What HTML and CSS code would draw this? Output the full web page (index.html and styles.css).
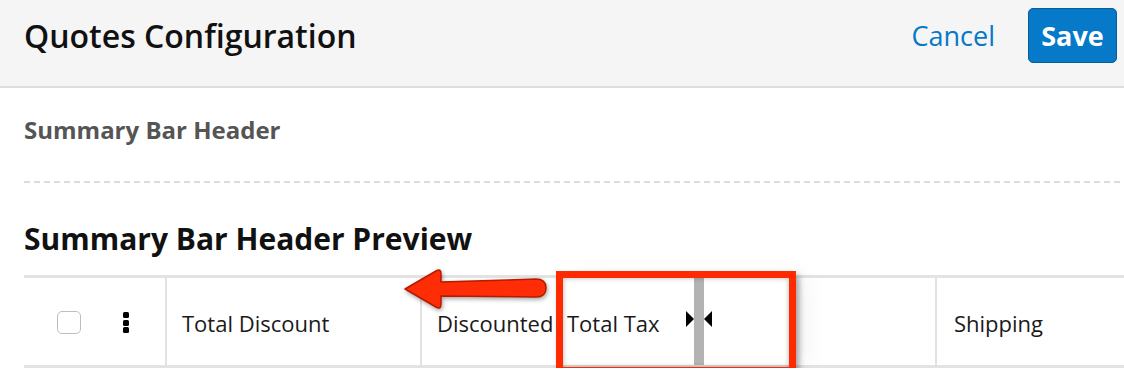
FILE: index.html
```html
<!DOCTYPE html>
<html>
<head>
<meta charset="utf-8">
<link rel="stylesheet" href="styles.css">
</head>
<body>
<header class="topbar">
  <h1 class="title">Quotes Configuration</h1>
  <div class="actions">
    <a class="cancel">Cancel</a>
    <button class="save">Save</button>
  </div>
</header>
<main class="content">
  <h2 class="section-title">Summary Bar Header</h2>
  <div class="dashed"></div>
  <h2 class="preview-title">Summary Bar Header Preview</h2>
  <div class="preview">
    <div class="row">
      <div class="cell select">
        <span class="checkbox"></span>
        <span class="dots"><i></i><i></i><i></i></span>
      </div>
      <div class="cell col-discount">Total Discount</div>
      <div class="cell col-subtotal"><span class="clip">Discounted Subtotal</span></div>
      <div class="cell col-empty"></div>
      <div class="cell col-shipping">Shipping</div>
    </div>
    <div class="dragged">
      <span class="dragged-label">Total Tax</span>
      <span class="resize">
        <svg width="26" height="16" viewBox="0 0 26 16"><path d="M0,0 L8,8 L0,16 Z M26,0 L18,8 L26,16 Z" fill="#000"/></svg>
      </span>
    </div>
    <div class="highlight"></div>
    <svg class="arrow" width="160" height="56" viewBox="0 0 160 56">
      <path d="M7,26 L38,8 Q43,5 43,11 L43,19 L138,16 Q148,16 148,25 Q148,34 138,34 L43,33 L43,41 Q43,47 38,44 Z" fill="#ff2d05" stroke="#b81a00" stroke-width="1.5" stroke-linejoin="round"/>
    </svg>
  </div>
</main>
</body>
</html>
```

FILE: styles.css
```css
* { box-sizing: border-box; }
body {
  margin: 0;
  font-family: "Open Sans", "Liberation Sans", sans-serif;
  color: #1a1a1a;
  background: #fff;
  overflow: hidden;
}
.topbar {
  height: 88px;
  background: #f5f5f5;
  border-bottom: 2px solid #dedede;
  display: flex;
  align-items: center;
  justify-content: space-between;
  padding: 0 7px 16px 24px;
}
.title {
  margin: 0;
  font-size: 32px;
  font-weight: 600;
  color: #111;
}
.actions {
  display: flex;
  align-items: center;
  gap: 33px;
}
.cancel {
  color: #0679c8;
  font-size: 27px;
  cursor: pointer;
}
.save {
  width: 89px;
  height: 55px;
  background: #0679c8;
  border: 1px solid #0a5c98;
  border-radius: 5px;
  color: #fff;
  font-family: "Open Sans", "Liberation Sans", sans-serif;
  font-size: 27px;
  font-weight: 700;
  padding: 0;
}
.content {
  padding: 0 0 0 24px;
}
.section-title {
  margin: 25px 0 0;
  font-size: 24px;
  line-height: 33px;
  font-weight: 700;
  color: #555;
}
.dashed {
  margin-top: 35px;
  height: 2px;
  background: repeating-linear-gradient(to right, #dcdcdc 0 6px, transparent 6px 10px);
}
.preview-title {
  margin: 35px 0 0;
  font-size: 30px;
  line-height: 41px;
  font-weight: 700;
  color: #111;
}
.preview {
  position: relative;
  margin-top: 16px;
}
.row {
  display: flex;
  height: 93px;
  border-top: 3px solid #e3e3e3;
  border-bottom: 3px solid #e3e3e3;
}
.cell {
  display: flex;
  align-items: center;
  font-size: 22px;
  white-space: nowrap;
  overflow: hidden;
  padding-top: 2px;
}
.select {
  width: 143px;
  border-right: 2px solid #e2e2e2;
  padding-left: 33px;
  gap: 42px;
}
.checkbox {
  width: 24px;
  height: 23px;
  border: 1px solid #bdbdbd;
  border-radius: 5px;
  background: #fff;
}
.dots {
  display: flex;
  flex-direction: column;
  gap: 1.5px;
}
.dots i {
  display: block;
  width: 6px;
  height: 6px;
  border-radius: 1.5px;
  background: #000;
}
.col-discount {
  width: 255px;
  padding-left: 15px;
  border-right: 2px solid #e2e2e2;
}
.col-subtotal {
  width: 258px;
  padding-left: 15px;
}
.clip {
  display: block;
  width: 125px;
  overflow: hidden;
}
.col-empty {
  width: 257px;
  border-right: 2px solid #e2e2e2;
}
.col-shipping {
  flex: 1;
  padding-left: 17px;
}
.dragged {
  position: absolute;
  left: 539px;
  top: 3px;
  width: 226px;
  height: 87px;
  background: #fff;
  display: flex;
  align-items: center;
  font-size: 22px;
  padding: 2px 0 0 4px;
  box-shadow: 14px 0 24px rgba(0, 0, 0, 0.07);
}
.dragged-label {
  white-space: nowrap;
}
.resize {
  position: absolute;
  left: 131px;
  top: 0;
  width: 10px;
  height: 87px;
  background: #b3b3b3;
}
.resize svg {
  position: absolute;
  left: -8px;
  top: 33px;
}
.highlight {
  position: absolute;
  left: 532px;
  top: -4px;
  width: 240px;
  height: 103px;
  border: 7px solid #ff2a00;
  box-shadow: 3px 4px 6px rgba(0, 0, 0, 0.35), inset 0 0 5px rgba(0, 0, 0, 0.3);
}
.arrow {
  position: absolute;
  left: 374px;
  top: -12px;
  filter: drop-shadow(1px 2px 2px rgba(0, 0, 0, 0.35));
}
```
